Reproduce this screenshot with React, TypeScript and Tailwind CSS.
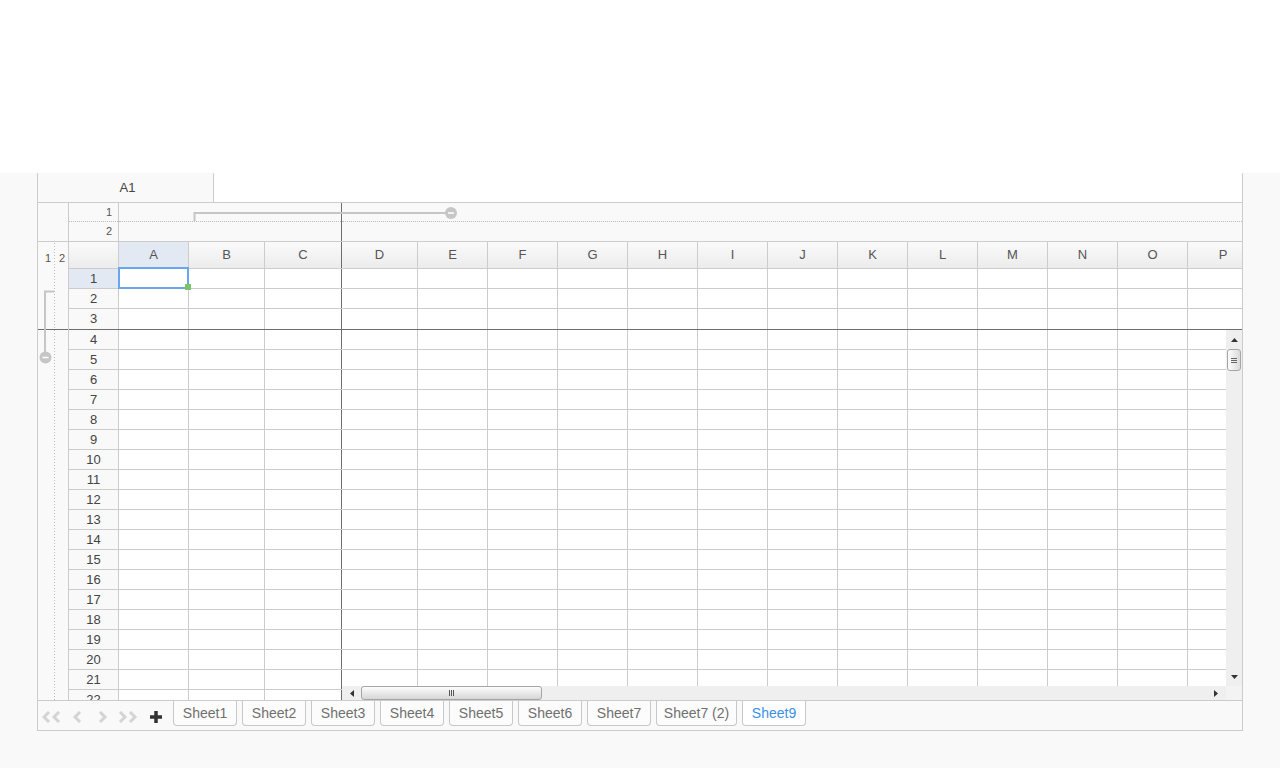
import React from 'react'

const LINE = 'border-[#cccccc]'
const FROZEN = 'border-[#6e6e6e]'

const cols = [
  { label: 'A', w: 'w-[70px] shrink-0' },
  { label: 'B', w: 'w-[76px] shrink-0' },
  { label: 'C', w: 'w-[77px] shrink-0', frozen: true },
  { label: 'D', w: 'w-[76px] shrink-0' },
  { label: 'E', w: 'w-[70px] shrink-0' },
  { label: 'F', w: 'w-[70px] shrink-0' },
  { label: 'G', w: 'w-[70px] shrink-0' },
  { label: 'H', w: 'w-[70px] shrink-0' },
  { label: 'I', w: 'w-[70px] shrink-0' },
  { label: 'J', w: 'w-[70px] shrink-0' },
  { label: 'K', w: 'w-[70px] shrink-0' },
  { label: 'L', w: 'w-[70px] shrink-0' },
  { label: 'M', w: 'w-[70px] shrink-0' },
  { label: 'N', w: 'w-[70px] shrink-0' },
  { label: 'O', w: 'w-[70px] shrink-0' },
  { label: 'P', w: 'flex-1 min-w-0 pl-[16px]', last: true },
]

const rows = Array.from({ length: 22 }, (_, i) => i + 1)

const sheets = [
  { name: 'Sheet1' },
  { name: 'Sheet2' },
  { name: 'Sheet3' },
  { name: 'Sheet4' },
  { name: 'Sheet5' },
  { name: 'Sheet6' },
  { name: 'Sheet7' },
  { name: 'Sheet7 (2)', wide: true },
  { name: 'Sheet9', active: true },
]

function cellBorder(c: { frozen?: boolean; last?: boolean }) {
  if (c.last) return ''
  return c.frozen ? `border-r ${FROZEN}` : `border-r ${LINE}`
}

function HeaderRow() {
  return (
    <div className={`flex h-[27px] shrink-0 border-b ${LINE} bg-linear-to-b from-[#fafafa] to-[#ececec] text-[13px] text-[#555]`}>
      <div className={`w-[50px] shrink-0 border-r ${LINE}`} />
      {cols.map((c) => (
        <div
          key={c.label}
          className={`${c.w} ${cellBorder(c)} flex items-center justify-center ${c.label === 'A' ? 'bg-[#e3e9f3]' : ''}`}
        >
          {c.label}
        </div>
      ))}
    </div>
  )
}

function Row({ n }: { n: number }) {
  const dark = n === 3
  return (
    <div className={`flex shrink-0 border-b ${dark ? `h-[21px] ${FROZEN}` : `h-[20px] ${LINE}`}`}>
      <div
        className={`w-[50px] shrink-0 border-r ${LINE} flex items-center justify-center text-[13px] text-[#444] ${n === 1 ? 'bg-[#e3e9f3]' : 'bg-[#f9f9f9]'}`}
      >
        {n}
      </div>
      {cols.map((c) => (
        <div key={c.label} className={`${c.w} ${cellBorder(c)} bg-white relative`}>
          {n === 1 && c.label === 'A' && (
            <>
              <div className="absolute -top-[2px] -left-[1px] -right-[1px] -bottom-[1px] border-2 border-[#68a7ec] z-10" />
              <div className="absolute left-[66px] top-[15px] w-[6px] h-[6px] bg-[#7cc46c] z-20" />
            </>
          )}
        </div>
      ))}
    </div>
  )
}

function RowOutline() {
  return (
    <div className={`relative w-[31px] shrink-0 border-r ${LINE} bg-[#f9f9f9] flex flex-col`}>
      <div className={`h-[88px] shrink-0 border-b ${FROZEN}`}>
        <div className="h-[27px] relative text-[11px] text-[#555]">
          <span className="absolute left-[7px] top-[8px]">1</span>
          <span className="absolute left-[21px] top-[8px]">2</span>
        </div>
      </div>
      <svg className="absolute left-0 top-0 pointer-events-none" width="30" height="459">
        <line x1="16.5" y1="1" x2="16.5" y2="459" stroke="#bdbdbd" strokeDasharray="1 2" />
        <path d="M16 49.5 H7 V112" fill="none" stroke="#c6c6c6" strokeWidth="2" />
        <circle cx="7.5" cy="115.5" r="6" fill="#c6c6c6" />
        <line x1="4.5" y1="115.5" x2="10.5" y2="115.5" stroke="#fff" strokeWidth="1.5" />
      </svg>
    </div>
  )
}

function Triangle({ dir }: { dir: 'up' | 'down' | 'left' | 'right' }) {
  const pts = {
    up: '0,4 3.5,0 7,4',
    down: '0,0 7,0 3.5,4',
    left: '4,0 4,7 0,3.5',
    right: '0,0 0,7 4,3.5',
  }[dir]
  const vertical = dir === 'up' || dir === 'down'
  return (
    <svg width={vertical ? 7 : 4} height={vertical ? 4 : 7}>
      <polygon points={pts} fill="#333" />
    </svg>
  )
}

function VScroll() {
  return (
    <div className="absolute right-0 top-[88px] bottom-[14px] w-[16px] bg-[#efefef] flex flex-col items-center">
      <div className="h-[19px] flex items-center justify-center">
        <Triangle dir="up" />
      </div>
      <div className="w-[14px] h-[22px] rounded-[3px] border border-[#a5a5a5] bg-linear-to-r from-[#fdfdfd] to-[#dadada] flex flex-col items-center justify-center gap-[1px]">
        <div className="w-[6px] h-px bg-[#666]" />
        <div className="w-[6px] h-px bg-[#666]" />
        <div className="w-[6px] h-px bg-[#666]" />
      </div>
      <div className="flex-1" />
      <div className="h-[18px] flex items-center justify-center">
        <Triangle dir="down" />
      </div>
    </div>
  )
}

function HScroll() {
  return (
    <div className="absolute left-[304px] right-[16px] bottom-0 h-[14px] bg-[#efefef] flex items-center">
      <div className="w-[19px] flex items-center justify-center">
        <Triangle dir="left" />
      </div>
      <div className="w-[181px] h-[14px] rounded-[3px] border border-[#a5a5a5] bg-linear-to-b from-[#fdfdfd] to-[#d6d6d6] flex items-center justify-center gap-[1px]">
        <div className="w-px h-[6px] bg-[#555]" />
        <div className="w-px h-[6px] bg-[#555]" />
        <div className="w-px h-[6px] bg-[#555]" />
      </div>
      <div className="flex-1" />
      <div className="w-[20px] flex items-center justify-center">
        <Triangle dir="right" />
      </div>
    </div>
  )
}

function Chevrons({ left, double }: { left?: boolean; double?: boolean }) {
  const one = (x: number) =>
    left ? `${x + 7},1 ${x + 2},6 ${x + 7},11` : `${x + 2},1 ${x + 7},6 ${x + 2},11`
  return (
    <svg width={double ? 20 : 10} height="12">
      <polyline points={one(0)} fill="none" stroke="#d4d4d4" strokeWidth="3" />
      {double && <polyline points={one(10)} fill="none" stroke="#d4d4d4" strokeWidth="3" />}
    </svg>
  )
}

function TabBar() {
  return (
    <div className="flex h-[29px] bg-[#f9f9f9]">
      <div className="w-[135px] shrink-0 flex items-center pt-[2px]">
        <div className="ml-[4px]">
          <Chevrons left double />
        </div>
        <div className="ml-[11px]">
          <Chevrons left />
        </div>
        <div className="ml-[15px]">
          <Chevrons />
        </div>
        <div className="ml-[10px]">
          <Chevrons double />
        </div>
        <svg className="ml-[12px]" width="12" height="12">
          <path d="M6 0 V12 M0 6 H12" stroke="#333" strokeWidth="3.5" />
        </svg>
      </div>
      <div className="flex items-start gap-[5px]">
        {sheets.map((s) => (
          <div
            key={s.name}
            className={`${s.wide ? 'w-[81px]' : 'w-[64px]'} h-[25px] border-x border-b border-[#c8c8c8] rounded-b-[4px] flex items-center justify-center text-[14px] ${s.active ? 'bg-white text-[#3b8fe8]' : 'bg-[#fcfcfc] text-[#707070]'}`}
          >
            {s.name}
          </div>
        ))}
      </div>
    </div>
  )
}

export default function App() {
  return (
    <div className="min-h-screen bg-[#f9f9f9] font-['Liberation_Sans',Arial,sans-serif]">
      <div className="h-[173px] bg-white" />
      <div className={`ml-[37px] w-[1206px] border-x border-b ${LINE} bg-white`}>
        {/* name box / formula bar */}
        <div className={`flex h-[30px] border-b ${LINE}`}>
          <div className={`w-[176px] shrink-0 border-r ${LINE} bg-[#f9f9f9] flex items-center justify-center pl-[4px] text-[13px] text-[#444]`}>
            A1
          </div>
          <div className="flex-1 bg-white" />
        </div>

        {/* column outline */}
        <div className={`relative flex h-[39px] border-b ${LINE} bg-[#f9f9f9] text-[11px] text-[#555]`}>
          <div className={`w-[31px] shrink-0 border-r ${LINE}`} />
          <div className={`w-[50px] shrink-0 border-r ${LINE} flex flex-col`}>
            <div className="h-[19px] border-b border-dotted border-[#bbbbbb] flex items-center justify-end pr-[6px]">1</div>
            <div className="flex-1 flex items-center justify-end pr-[6px]">2</div>
          </div>
          <div className={`w-[223px] shrink-0 border-r ${FROZEN} flex flex-col`}>
            <div className="h-[19px] border-b border-dotted border-[#bbbbbb]" />
          </div>
          <div className="flex-1 flex flex-col">
            <div className="h-[19px] border-b border-dotted border-[#bbbbbb]" />
          </div>
          <svg className="absolute left-0 top-0 pointer-events-none" width="430" height="30">
            <path d="M156.5 18 V10 H413" fill="none" stroke="#c6c6c6" strokeWidth="2" />
            <circle cx="413" cy="10" r="6" fill="#c6c6c6" />
            <line x1="410" y1="10" x2="416" y2="10" stroke="#fff" strokeWidth="1.5" />
          </svg>
        </div>

        {/* grid */}
        <div className={`relative flex h-[459px] border-b ${LINE} overflow-hidden`}>
          <RowOutline />
          <div className="flex-1 min-w-0 flex flex-col">
            <HeaderRow />
            {rows.map((n) => (
              <Row key={n} n={n} />
            ))}
          </div>
          <VScroll />
          <HScroll />
          <div className="absolute right-0 bottom-0 w-[16px] h-[14px] bg-[#f3f3f3]" />
        </div>

        <TabBar />
      </div>
    </div>
  )
}
